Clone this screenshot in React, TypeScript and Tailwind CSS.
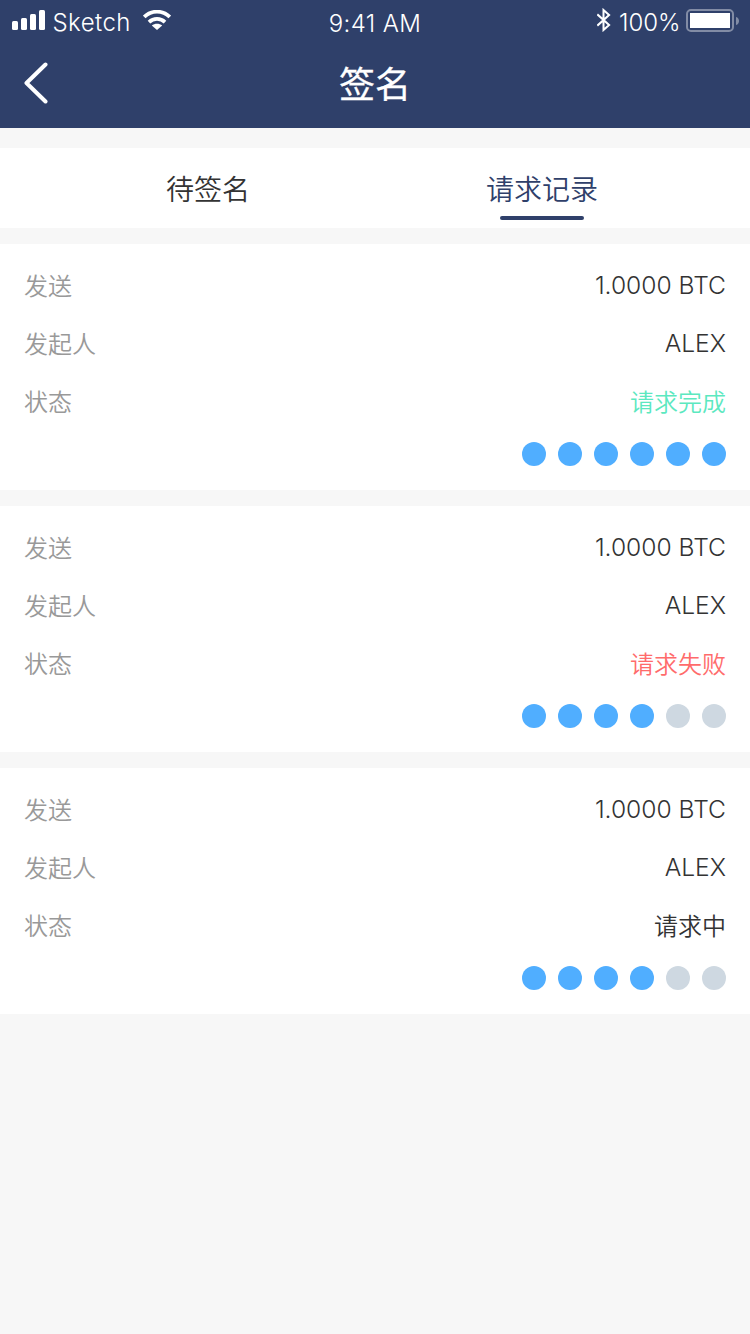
type RequestRecord = {
  amount: string;
  initiator: string;
  status: string;
  statusClass: string;
  signed: number;
};

const TOTAL_SIGNERS = 6;

const records: RequestRecord[] = [
  { amount: "1.0000 BTC", initiator: "ALEX", status: "请求完成", statusClass: "text-[#5ce8c0]", signed: 6 },
  { amount: "1.0000 BTC", initiator: "ALEX", status: "请求失败", statusClass: "text-[#ff6b6b]", signed: 4 },
  { amount: "1.0000 BTC", initiator: "ALEX", status: "请求中", statusClass: "text-[#333333]", signed: 4 },
];

function StatusBar() {
  return (
    <div className="grid h-10 grid-cols-3 text-[24px] leading-[40px]">
      <div className="flex pl-3">
        <svg className="mt-[10px] h-5 w-[33px]" viewBox="0 0 33 20" fill="currentColor">
          <rect x="0" y="11" width="6" height="9" rx="1.5" />
          <rect x="9" y="8" width="6" height="12" rx="1.5" />
          <rect x="18" y="4" width="6" height="16" rx="1.5" />
          <rect x="27" y="0" width="6" height="20" rx="1.5" />
        </svg>
        <span className="ml-[7.5px] mt-[3px] w-[77.5px] whitespace-nowrap tracking-[0.45px]">Sketch</span>
        <svg className="ml-[13px] mt-[10px] h-5 w-7" viewBox="0 0 28 20" fill="none" stroke="currentColor">
          <path d="M1.2 7C8.4 -.1 19.6 -.1 26.8 7" strokeWidth="3.8" />
          <path d="M6 12.1C10.5 7.8 17.5 7.8 22 12.1" strokeWidth="3.7" />
          <path d="M8.8 15.6C11.7 13 16.3 13 19.2 15.6L14 20Z" fill="currentColor" stroke="none" />
        </svg>
      </div>
      <div className="mt-[4px] text-center tracking-[0.4px]">9:41 AM</div>
      <div className="flex justify-end pr-[11px]">
        <svg className="mr-0.5 mt-2 h-6 w-[14px]" viewBox="0 0 14 24" fill="none" stroke="currentColor" strokeWidth="2">
          <path d="M.3 6.3L12.1 17.1L6.5 22V2L12.1 6.9L.3 17.7" />
        </svg>
        <span className="ml-[6px] mt-[3px] w-[63px] whitespace-nowrap">100%</span>
        <svg className="ml-[4px] mt-[9px] h-[23px] w-[53px]" viewBox="0 0 53 23" fill="none">
          <rect x="1" y="1" width="46" height="21" rx="4" stroke="currentColor" strokeOpacity=".4" strokeWidth="2" />
          <rect x="4" y="4" width="40" height="15" fill="currentColor" />
          <path d="M50 8C54 9 54 15 50 16Z" fill="currentColor" fillOpacity=".4" />
        </svg>
      </div>
    </div>
  );
}

function Header() {
  return (
    <header className="h-32 bg-[#2f406a] text-white">
      <StatusBar />
      <div className="grid h-[88px] grid-cols-3">
        <svg className="ml-6 mt-[22px] h-[42px] w-6" viewBox="0 0 24 42" fill="none" stroke="currentColor" strokeWidth="4" strokeLinecap="round" strokeLinejoin="round">
          <path d="M21.5 2.5L2.5 21L21.5 39.5" />
        </svg>
        <h1 className="pt-5 text-center text-[36px] font-normal leading-[50px] [-webkit-text-stroke:0.3px_white]">签名</h1>
      </div>
    </header>
  );
}

function Tabs() {
  return (
    <nav className="mt-5 flex h-20 bg-white px-[41px] text-[28px] leading-[40px]">
      <div className="flex-1 pt-[22px] text-center text-[#333333]">待签名</div>
      <div className="flex flex-1 flex-col items-center pt-[22px] text-[#2f406a]">
        <span>请求记录</span>
        <span className="mt-[6px] h-1 w-[84px] rounded-full bg-[#2f406a]" />
      </div>
    </nav>
  );
}

function RecordCard({ record }: { record: RequestRecord }) {
  const rows = [
    { label: "发送", value: record.amount, style: "text-[24.6px] leading-[32px] text-[#333333]" },
    { label: "发起人", value: record.initiator, style: "text-[24.6px] leading-[32px] text-[#333333]" },
    { label: "状态", value: record.status, style: `pt-px ${record.statusClass}` },
  ];
  return (
    <section className="h-[246px] bg-white px-6 pt-[25px]">
      <dl className="flex flex-col gap-6 text-[24px] leading-[34px]">
        {rows.map((row) => (
          <div key={row.label} className="flex h-[34px] justify-between">
            <dt className="pt-px text-[#999999]">{row.label}</dt>
            <dd className={row.style}>{row.value}</dd>
          </div>
        ))}
      </dl>
      <div className="mt-[23px] flex justify-end gap-3">
        {Array.from({ length: TOTAL_SIGNERS }, (_, i) => (
          <span key={i} className={i < record.signed ? "size-6 rounded-full bg-[#50aeff]" : "size-6 rounded-full bg-[#ced8e1]"} />
        ))}
      </div>
    </section>
  );
}

export default function App() {
  return (
    <div className="min-h-screen bg-[#f7f7f7] font-['Inter','Noto_Sans_CJK_SC',sans-serif] font-[350]">
      <Header />
      <Tabs />
      <main className="mt-4 flex flex-col gap-4">
        {records.map((record, i) => (
          <RecordCard key={i} record={record} />
        ))}
      </main>
    </div>
  );
}
